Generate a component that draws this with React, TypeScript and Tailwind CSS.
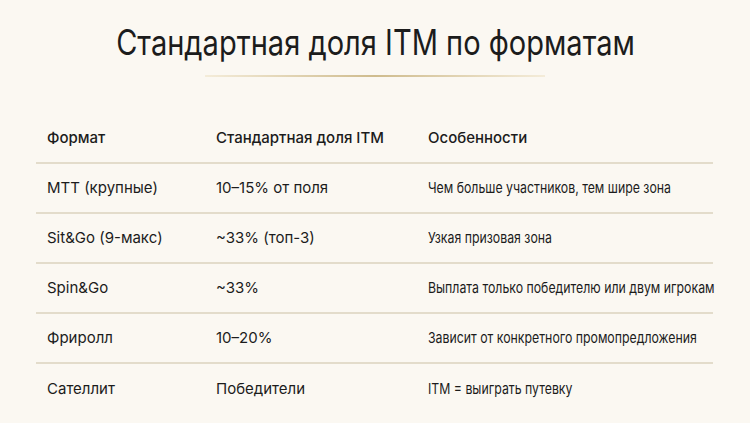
const rows = [
  { format: "MTT (крупные)", share: "10–15% от поля", note: "Чем больше участников, тем шире зона" },
  { format: "Sit&Go (9-макс)", share: "~33% (топ-3)", note: "Узкая призовая зона" },
  { format: "Spin&Go", share: "~33%", note: "Выплата только победителю или двум игрокам" },
  { format: "Фриролл", share: "10–20%", note: "Зависит от конкретного промопредложения" },
  { format: "Сателлит", share: "Победители", note: "ITM = выиграть путевку" },
];

export default function App() {
  return (
    <div className="w-[750px] h-[423px] overflow-hidden bg-[#fbf8f2] font-['Inter','Noto_Sans',sans-serif] text-[#1c1c1c]">
      {/* Title */}
      <div className="flex flex-col items-center pt-[19px]">
        <h1 className="text-[35px] leading-[46px] font-normal whitespace-nowrap scale-x-[0.83]">
          Стандартная доля ITM по форматам
        </h1>
        <div className="mt-[10px] h-[2px] w-[340px] bg-gradient-to-r from-[#f4ecd9] via-[#cfbc8e] to-[#f4ecd9]" />
      </div>

      {/* Table */}
      <div className="mx-[36px] mt-[38px] w-[677px]">
        <div className="flex items-center h-[49px] border-b-2 border-[#e3dccb] text-[15px] font-medium">
          <div className="w-[180px] shrink-0 pl-[11px]">Формат</div>
          <div className="w-[212px] shrink-0">Стандартная доля ITM</div>
          <div className="flex-1">Особенности</div>
        </div>
        {rows.map((r, i) => (
          <div
            key={r.format}
            className={`flex items-center h-[50px] text-[15px] ${i < rows.length - 1 ? "border-b-2 border-[#e3dccb]" : ""}`}
          >
            <div className="w-[180px] shrink-0 pl-[11px]">{r.format}</div>
            <div className="w-[212px] shrink-0">{r.share}</div>
            <div className="flex-1 min-w-0 whitespace-nowrap">
              <span className="inline-block origin-left scale-x-[0.82]">{r.note}</span>
            </div>
          </div>
        ))}
      </div>
    </div>
  );
}
